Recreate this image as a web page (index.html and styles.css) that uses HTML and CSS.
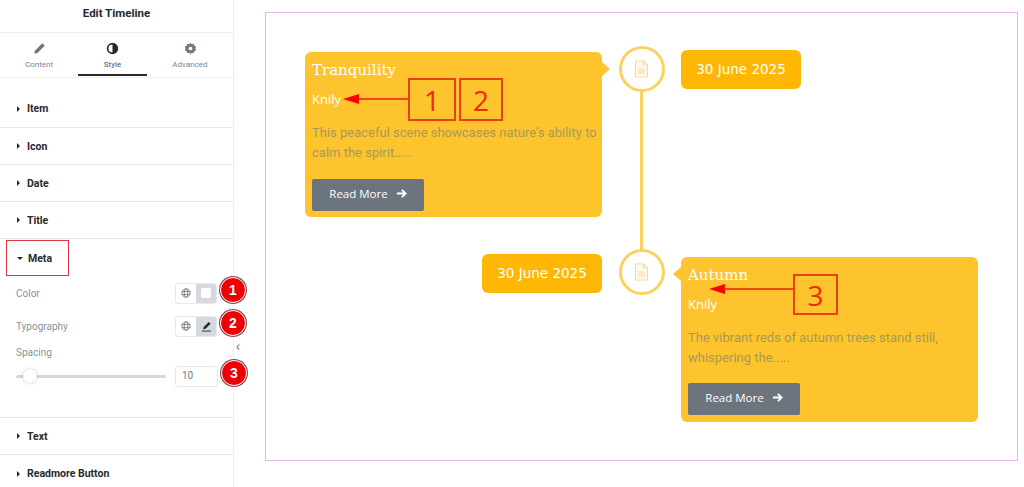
FILE: index.html
```html
<!DOCTYPE html>
<html lang="en">

<head>
    <meta charset="UTF-8" />
    <meta name="viewport" content="width=device-width, initial-scale=1.0" />
    <title>Edit Timeline</title>
    <link rel="stylesheet" href="styles.css">
</head>

<body>

    <aside class="panel">
        <div class="panel-title">Edit Timeline</div>

        <div class="tabs">
            <div class="tab">
                <svg class="tab-icon" viewBox="0 0 16 16"><path d="M11.500 1.500l3 3L5.500 13.500l-4 1 1-4z" fill="#6d7882" /></svg>
                <span>Content</span>
            </div>
            <div class="tab active">
                <svg class="tab-icon" viewBox="0 0 16 16"><circle cx="8" cy="8" r="6" fill="none" stroke="#26292c" stroke-width="2" /><path d="M8 2a6 6 0 0 1 0 12z" fill="#26292c" /></svg>
                <span>Style</span>
            </div>
            <div class="tab">
                <svg class="tab-icon" viewBox="0 0 16 16"><path d="M8 1l1.600 1.700 2.300-.4.7 2.200 2.200.9-.7 2.600.7 2.600-2.200.9-.7 2.200-2.300-.4L8 15l-1.600-1.700-2.300.4-.7-2.200-2.200-.9.7-2.600-.7-2.600 2.200-.9.7-2.200 2.300.4z" fill="#6d7882" /><circle cx="8" cy="8" r="2.300" fill="#fff" /></svg>
                <span>Advanced</span>
            </div>
        </div>

        <div class="acc first"><i class="caret"></i>Item</div>
        <div class="acc"><i class="caret"></i>Icon</div>
        <div class="acc"><i class="caret"></i>Date</div>
        <div class="acc"><i class="caret"></i>Title</div>

        <div class="meta">
            <div class="meta-head"><i class="caret down"></i>Meta</div>

            <div class="control">
                <label>Color</label>
                <div class="switch">
                    <span class="switch-part">
                        <svg class="globe" viewBox="0 0 12 12"><circle cx="6" cy="6" r="5" /><ellipse cx="6" cy="6" rx="2.200" ry="5" /><path d="M1 4.300h10M1 7.700h10" /></svg>
                    </span>
                    <span class="switch-part on"><i class="swatch"></i></span>
                </div>
                <b class="badge">1</b>
            </div>

            <div class="control typo">
                <label>Typography</label>
                <div class="switch">
                    <span class="switch-part">
                        <svg class="globe" viewBox="0 0 12 12"><circle cx="6" cy="6" r="5" /><ellipse cx="6" cy="6" rx="2.200" ry="5" /><path d="M1 4.300h10M1 7.700h10" /></svg>
                    </span>
                    <span class="switch-part on">
                        <svg class="pen" viewBox="0 0 12 12"><path d="M8.500 1l2 2-5.500 5.500-2.800.8.800-2.800z" fill="#26292c" /><path d="M1 11h10" stroke="#26292c" /></svg>
                    </span>
                </div>
                <b class="badge">2</b>
            </div>

            <label class="spacing-label">Spacing</label>
            <div class="slider-row">
                <div class="slider"><i class="knob"></i></div>
                <div class="num">10</div>
                <b class="badge">3</b>
            </div>
        </div>

        <div class="acc"><i class="caret"></i>Text</div>
        <div class="acc last"><i class="caret"></i>Readmore Button</div>

        <span class="collapse">&#8249;</span>
    </aside>

    <main class="canvas">
        <div class="timeline">
            <div class="card arrow-right">
                <h3>Tranquility</h3>
                <div class="author">Knily</div>
                <p>This peaceful scene showcases nature's ability to calm the spirit.....</p>
                <a class="more">Read More
                    <svg viewBox="0 0 12 12"><path d="M1 6h9M6.500 2l4 4-4 4" fill="none" stroke="#fff" stroke-width="2" /></svg>
                </a>
            </div>
            <div class="axis first-axis">
                <div class="dot">
                    <svg viewBox="0 0 14 18"><path d="M1 1h8l4 4v12H1z" fill="#fefaf0" stroke="#f9d9a0" stroke-width="1.200" /><path d="M9 1v4h4M3.500 9h7M3.500 11h7M3.500 13h7" fill="none" stroke="#f9d9a0" /></svg>
                </div>
            </div>
            <div class="date-cell"><div class="date">30 June 2025</div></div>

            <div class="date-cell left"><div class="date">30 June 2025</div></div>
            <div class="axis second">
                <div class="dot">
                    <svg viewBox="0 0 14 18"><path d="M1 1h8l4 4v12H1z" fill="#fefaf0" stroke="#f9d9a0" stroke-width="1.200" /><path d="M9 1v4h4M3.500 9h7M3.500 11h7M3.500 13h7" fill="none" stroke="#f9d9a0" /></svg>
                </div>
            </div>
            <div class="card arrow-left low">
                <h3>Autumn</h3>
                <div class="author">Knily</div>
                <p>The vibrant reds of autumn trees stand still, whispering the.....</p>
                <a class="more">Read More
                    <svg viewBox="0 0 12 12"><path d="M1 6h9M6.500 2l4 4-4 4" fill="none" stroke="#fff" stroke-width="2" /></svg>
                </a>
            </div>
        </div>
    </main>

    <!-- red notes drawn over the screenshot -->
    <div class="note n1">1</div>
    <div class="note n2">2</div>
    <div class="note n3">3</div>
    <svg class="note-arrows" viewBox="0 0 1024 487">
        <path d="M355 99h53M722 289h71" stroke="#ee1c0a" stroke-width="1.500" />
        <path d="M343 99l16-5v10zM709 289l16-5v10z" fill="#f00" />
    </svg>

</body>

</html>
```

FILE: styles.css
```css
* {
    box-sizing: border-box;
}

html,
body {
    height: 100%;
}

body {
    margin: 0;
    display: flex;
    height: 487px;
    overflow: hidden;
    background-color: #fff;
    color: #26292c;
    font-family: Roboto, "Liberation Sans", sans-serif;
}

/* left panel */
.panel {
    position: relative;
    flex: 0 0 234px;
    border-right: 1px solid #eceeef;
    background-color: #fff;
}

.panel-title {
    height: 33px;
    padding-top: 6px;
    text-align: center;
    font-size: 11.5px;
    font-weight: 700;
    border-bottom: 1px solid #eceeef;
}

.tabs {
    display: flex;
    height: 45px;
    border-bottom: 1px solid #eceeef;
}

.tab {
    flex: 1;
    display: flex;
    flex-direction: column;
    align-items: center;
    padding-top: 9px;
    font-size: 8px;
    color: #7d858c;
}

.tab:first-child {
    flex: 0 0 78px;
}

.tab:nth-child(2) {
    flex: 0 0 69px;
}

.tab.active {
    color: #4c5257;
    border-bottom: 2px solid #26292c;
    height: 43px;
}

.tab-icon {
    width: 13px;
    height: 13px;
    margin-bottom: 5px;
}

.acc {
    display: flex;
    align-items: center;
    height: 37px;
    padding-left: 17px;
    font-size: 10.5px;
    font-weight: 700;
    border-bottom: 1px solid #e6e8ea;
}

.acc.first {
    height: 50px;
    padding-top: 12px;
}

.acc.last {
    border-bottom: none;
}

.caret {
    width: 0;
    height: 0;
    margin-right: 7px;
    border-left: 3px solid #26292c;
    border-top: 3px solid transparent;
    border-bottom: 3px solid transparent;
}

.caret.down {
    margin-right: 5px;
    border-left: 3px solid transparent;
    border-right: 3px solid transparent;
    border-top: 3px solid #26292c;
    border-bottom: 0;
}

/* open section */
.meta {
    height: 179px;
    padding-top: 1px;
    border-bottom: 1px solid #e6e8ea;
}

.meta-head {
    display: flex;
    align-items: center;
    width: 63px;
    height: 36px;
    margin-left: 6px;
    padding-left: 10px;
    font-size: 10.5px;
    font-weight: 700;
    border: 1px solid #d9363e;
}

.control {
    display: flex;
    align-items: center;
    justify-content: space-between;
    height: 22px;
    margin-top: 6px;
    padding: 0 16px 0 16px;
}

.control.typo {
    margin-top: 11px;
}

label {
    font-size: 10px;
    color: #8b9299;
}

.switch {
    display: flex;
    width: 42px;
    height: 21px;
    border: 1px solid #e6e8ea;
    border-radius: 3px;
    overflow: hidden;
}

.switch-part {
    flex: 1;
    display: flex;
    align-items: center;
    justify-content: center;
}

.switch-part.on {
    background-color: #d5d8dc;
}

.globe {
    width: 10px;
    height: 10px;
    fill: none;
    stroke: #6d7882;
    stroke-width: 1;
}

.pen {
    width: 11px;
    height: 11px;
}

.swatch {
    width: 10px;
    height: 10px;
    border-radius: 2px;
    background-color: #fff;
}

.badge {
    position: absolute;
    right: -13px;
    width: 26px;
    height: 26px;
    border-radius: 50%;
    background-color: #ee0006;
    color: #fff;
    border: 1px solid #fff;
    box-shadow: 0 0 0 1px #8a4a4a;
    transform: translateY(-3px);
    text-align: center;
    font: 700 14px/24px "Liberation Sans", sans-serif;
}

.spacing-label {
    display: block;
    margin: 10px 0 0 16px;
    height: 14px;
}

.slider-row {
    display: flex;
    align-items: center;
    height: 22px;
    margin-top: 4px;
    padding-left: 16px;
}

.slider {
    position: relative;
    width: 150px;
    height: 3px;
    border-radius: 2px;
    background-color: #d5d8dc;
}

.knob {
    position: absolute;
    left: 7px;
    top: -6px;
    width: 14px;
    height: 14px;
    border-radius: 50%;
    background-color: #fff;
    box-shadow: 0 0 3px rgba(0, 0, 0, 0.25);
}

.num {
    width: 43px;
    height: 21px;
    margin-left: 9px;
    padding: 3px 0 0 6px;
    font-size: 10px;
    color: #6d7882;
    border: 1px solid #e6e8ea;
    border-radius: 3px;
}

.slider-row .badge {
    right: -14px;
}

.collapse {
    position: absolute;
    right: -7px;
    top: 339px;
    font-size: 14px;
    line-height: 1;
    color: #6d7882;
}

/* canvas */
.canvas {
    flex: 1;
    padding: 12px 6px 26px 31px;
}

.timeline {
    display: grid;
    grid-template-columns: 297px 79px 297px;
    grid-template-rows: 202px 1fr;
    height: 449px;
    padding: 39px 0 0 39px;
    border: 1px solid #e9b4ec;
}

.card {
    position: relative;
    height: 165px;
    padding: 8px 0 0 7px;
    border-radius: 6px;
    background-color: #fec42d;
}

.card.low {
    margin-top: 3px;
}

.card.low .more {
    margin-top: 15px;
}

.card h3 {
    margin: 0;
    height: 20px;
    font: 400 15px/20px "DejaVu Serif", serif;
    color: #fff;
}

.author {
    margin-top: 9px;
    font: 13px/20px "Open Sans", sans-serif;
    color: #fff;
}

.card p {
    margin: 14px 0 0;
    font: 13px/20px Roboto, sans-serif;
    color: #a69a55;
}

.more {
    display: flex;
    align-items: center;
    justify-content: center;
    gap: 8px;
    width: 112px;
    height: 32px;
    margin-top: 16px;
    padding-bottom: 3px;
    border-radius: 2px;
    background-color: #6c757d;
    color: #fff;
    font: 11.5px "Open Sans", sans-serif;
}

.more svg {
    width: 11px;
    height: 11px;
}

.arrow-right::after,
.arrow-left::after {
    content: "";
    position: absolute;
    top: 10px;
    width: 0;
    height: 0;
    border-top: 7px solid transparent;
    border-bottom: 7px solid transparent;
}

.arrow-right::after {
    right: -8px;
    border-left: 8px solid #fec42d;
}

.arrow-left::after {
    left: -8px;
    border-right: 8px solid #fec42d;
}

.axis {
    position: relative;
    display: flex;
    justify-content: center;
    margin-top: -6px;
}

.first-axis::after {
    content: "";
    position: absolute;
    left: 38px;
    top: 45px;
    width: 3px;
    height: 159px;
    background-color: #fbd15f;
}

.dot {
    position: relative;
    z-index: 1;
    display: flex;
    align-items: center;
    justify-content: center;
    width: 46px;
    height: 46px;
    border: 3px solid #fbd15f;
    border-radius: 50%;
    background-color: #fff;
}

.dot svg {
    width: 15px;
    height: 18px;
}

.axis.second {
    margin-top: -5px;
}

.date-cell {
    display: flex;
    align-items: flex-start;
    margin-top: -2px;
}

.date-cell.left {
    justify-content: flex-end;
    margin-top: 0;
}

.date {
    width: 120px;
    height: 39px;
    border-radius: 6px;
    background-color: #ffb705;
    color: #fff;
    text-align: center;
    font: 13.5px/39px "DejaVu Sans", sans-serif;
}

/* notes */
.note {
    position: absolute;
    display: flex;
    align-items: center;
    justify-content: center;
    border: 2px solid #e8400f;
    color: #ee2a08;
    font: 28px "Open Sans", sans-serif;
}

.n1 {
    left: 408px;
    top: 78px;
    width: 48px;
    height: 43px;
}

.n2 {
    left: 459px;
    top: 78px;
    width: 44px;
    height: 43px;
}

.n3 {
    left: 793px;
    top: 274px;
    width: 45px;
    height: 41px;
}

.note-arrows {
    position: absolute;
    left: 0;
    top: 0;
    width: 1024px;
    height: 487px;
    pointer-events: none;
}
```
